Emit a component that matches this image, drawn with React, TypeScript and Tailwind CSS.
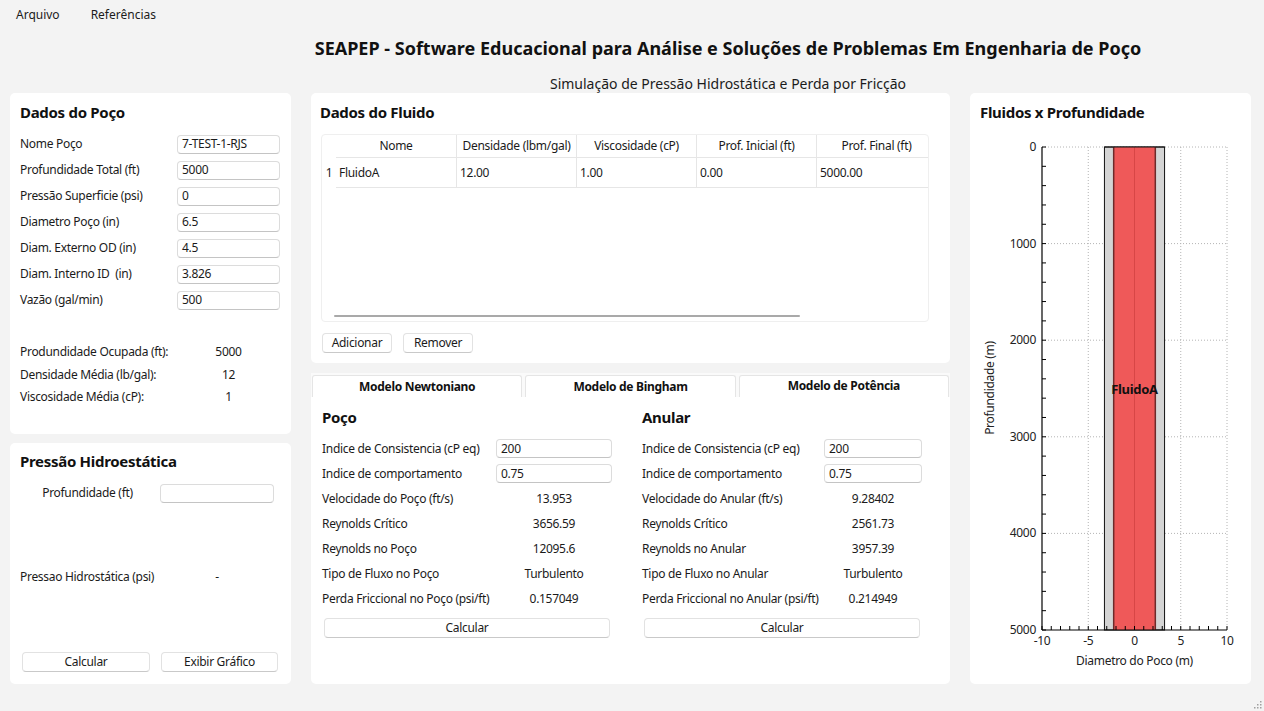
import React from 'react';

const font = { fontFamily: '"Noto Sans", "Open Sans", sans-serif' };

const Input: React.FC<{ value?: string; className?: string }> = ({ value = '', className = '' }) => (
  <div
    className={`h-[19px] bg-white border border-[#dcdcdc] border-b-[#c4c4c4] rounded-[4px] pl-[4px] flex items-center text-[12px] text-[#1b1b1b] ${className}`}
  >
    {value}
  </div>
);

const Button: React.FC<{ label: string; className?: string }> = ({ label, className = '' }) => (
  <div
    className={`h-[20px] bg-white border border-[#e2e2e2] border-b-[#c9c9c9] rounded-[4px] flex items-center justify-center text-[12px] text-[#1b1b1b] ${className}`}
  >
    {label}
  </div>
);

const wellRows: [string, string][] = [
  ['Nome Poço', '7-TEST-1-RJS'],
  ['Profundidade Total (ft)', '5000'],
  ['Pressão Superficie (psi)', '0'],
  ['Diametro Poço (in)', '6.5'],
  ['Diam. Externo OD (in)', '4.5'],
  ['Diam. Interno ID  (in)', '3.826'],
  ['Vazão (gal/min)', '500'],
];

const statRows: [string, string][] = [
  ['Produndidade Ocupada (ft):', '5000'],
  ['Densidade Média (lb/gal):', '12'],
  ['Viscosidade Média (cP):', '1'],
];

const columns = ['Nome', 'Densidade (lbm/gal)', 'Viscosidade (cP)', 'Prof. Inicial (ft)', 'Prof. Final (ft)'];
const fluidRow = ['FluidoA', '12.00', '1.00', '0.00', '5000.00'];

type ModelSide = {
  title: string;
  inputs: [string, string][];
  values: [string, string][];
};

const poco: ModelSide = {
  title: 'Poço',
  inputs: [
    ['Indice de Consistencia (cP eq)', '200'],
    ['Indice de comportamento', '0.75'],
  ],
  values: [
    ['Velocidade do Poço (ft/s)', '13.953'],
    ['Reynolds Crítico', '3656.59'],
    ['Reynolds no Poço', '12095.6'],
    ['Tipo de Fluxo no Poço', 'Turbulento'],
    ['Perda Friccional no Poço (psi/ft)', '0.157049'],
  ],
};

const anular: ModelSide = {
  title: 'Anular',
  inputs: [
    ['Indice de Consistencia (cP eq)', '200'],
    ['Indice de comportamento', '0.75'],
  ],
  values: [
    ['Velocidade do Anular (ft/s)', '9.28402'],
    ['Reynolds Crítico', '2561.73'],
    ['Reynolds no Anular', '3957.39'],
    ['Tipo de Fluxo no Anular', 'Turbulento'],
    ['Perda Friccional no Anular (psi/ft)', '0.214949'],
  ],
};

const ModelColumn: React.FC<{ side: ModelSide; labelW: string; inputW: string; btnW: string; className?: string }> = ({
  side,
  labelW,
  inputW,
  btnW,
  className = '',
}) => (
  <div className={`flex flex-col ${className}`}>
    <div className="h-[20px] leading-[20px] text-[15px] font-bold text-[#111]">{side.title}</div>
    <div className="mt-[9px] flex flex-col">
      {side.inputs.map(([l, v]) => (
        <div key={l} className="h-[25px] flex items-center">
          <div className={`${labelW} shrink-0 text-[12px] whitespace-nowrap`}>{l}</div>
          <Input value={v} className={inputW} />
        </div>
      ))}
      {side.values.map(([l, v]) => (
        <div key={l} className="h-[25px] flex items-center">
          <div className={`${labelW} shrink-0 text-[12px] whitespace-nowrap`}>{l}</div>
          <div className={`${inputW} text-center text-[12px]`}>{v}</div>
        </div>
      ))}
    </div>
    <Button label="Calcular" className={`mt-[7px] ml-[2px] ${btnW}`} />
  </div>
);

const Chart: React.FC = () => {
  const left = 72;
  const right = 257;
  const top = 16;
  const bottom = 499;
  const sx = (v: number) => left + ((v + 10) / 20) * (right - left);
  const sy = (d: number) => top + (d / 5000) * (bottom - top);
  const majorY = [0, 1000, 2000, 3000, 4000, 5000];
  const minorY = Array.from({ length: 26 }, (_, i) => i * 200);
  const majorX = [-10, -5, 0, 5, 10];
  const minorX = Array.from({ length: 21 }, (_, i) => i - 10);

  return (
    <svg width={281} height={553} className="block">
      {/* grid */}
      {majorY.slice(0, 5).map((d) => (
        <line key={`gy${d}`} x1={left} x2={right} y1={sy(d)} y2={sy(d)} stroke="#b4b4b4" strokeDasharray="1 2" />
      ))}
      {majorX.slice(1).map((v) => (
        <line key={`gx${v}`} x1={sx(v)} x2={sx(v)} y1={top} y2={bottom} stroke="#b4b4b4" strokeDasharray="1 2" />
      ))}
      {/* well */}
      <rect x={sx(-3.25)} y={top} width={sx(3.25) - sx(-3.25)} height={bottom - top} fill="#d4d4d4" stroke="#111" strokeWidth={1} />
      <rect x={sx(-2.25)} y={top} width={sx(2.25) - sx(-2.25)} height={bottom - top} fill="#ef5959" />
      <line x1={sx(-2.25)} x2={sx(-2.25)} y1={top} y2={bottom} stroke="#6e2a2a" strokeWidth={1.5} />
      <line x1={sx(2.25)} x2={sx(2.25)} y1={top} y2={bottom} stroke="#6e2a2a" strokeWidth={1.5} />
      <line x1={sx(0)} x2={sx(0)} y1={top} y2={bottom} stroke="#d84646" strokeWidth={1} />
      <line x1={sx(-3.25)} x2={sx(3.25)} y1={top} y2={top} stroke="#111" strokeWidth={1} />
      <text x={sx(0)} y={sy(2500) + 5} textAnchor="middle" fontSize={13} fontWeight={700} fill="#111">
        FluidoA
      </text>
      {/* axes */}
      <line x1={left} x2={left} y1={top} y2={bottom} stroke="#000" strokeWidth={1.2} />
      <line x1={left} x2={right} y1={bottom} y2={bottom} stroke="#000" strokeWidth={1.2} />
      {minorY.map((d) => (
        <line key={`ty${d}`} x1={left} x2={left + 4} y1={sy(d)} y2={sy(d)} stroke="#000" />
      ))}
      {minorX.map((v) => (
        <line key={`tx${v}`} x1={sx(v)} x2={sx(v)} y1={bottom} y2={bottom - 4} stroke="#000" />
      ))}
      {majorY.map((d) => (
        <text key={`ly${d}`} x={left - 6} y={sy(d) + 4} textAnchor="end" fontSize={12} fill="#222">
          {d}
        </text>
      ))}
      {majorX.map((v) => (
        <text key={`lx${v}`} x={sx(v)} y={bottom + 15} textAnchor="middle" fontSize={12} fill="#222">
          {v}
        </text>
      ))}
      <text x={sx(0)} y={bottom + 35} textAnchor="middle" fontSize={12} fill="#222">
        Diametro do Poco (m)
      </text>
      <text
        x={24}
        y={257}
        textAnchor="middle"
        fontSize={12}
        fill="#222"
        transform="rotate(-90 24 257)"
      >
        Profundidade (m)
      </text>
    </svg>
  );
};

const App: React.FC = () => {
  return (
    <div
      className="relative w-[1264px] h-[711px] bg-[#f3f3f3] flex flex-col text-[#1b1b1b] overflow-hidden tracking-[-0.3px]"
      style={font}
    >
      {/* menu */}
      <div className="h-[30px] flex items-center pl-[16px] gap-[31px] text-[12px] tracking-normal">
        <span>Arquivo</span>
        <span>Referências</span>
      </div>

      {/* header */}
      <div className="h-[63px] ml-[192px] flex flex-col items-center tracking-normal">
        <div className="mt-[6px] h-[24px] leading-[24px] text-[18px] font-bold text-[#111]">
          SEAPEP - Software Educacional para Análise e Soluções de Problemas Em Engenharia de Poço
        </div>
        <div className="mt-[15px] h-[18px] leading-[18px] text-[14px]">Simulação de Pressão Hidrostática e Perda por Fricção</div>
      </div>

      {/* main */}
      <div className="flex pl-[10px] gap-[20px] h-[591px]">
        {/* left column */}
        <div className="w-[281px] flex flex-col gap-[9px]">
          <div className="h-[341px] bg-white rounded-[5px] pt-[9px] px-[10px] flex flex-col">
            <div className="h-[20px] leading-[20px] text-[15px] font-bold text-[#111]">Dados do Poço</div>
            <div className="mt-[9px] flex flex-col">
              {wellRows.map(([l, v]) => (
                <div key={l} className="h-[26px] flex items-center">
                  <div className="w-[157px] shrink-0 text-[12px] whitespace-pre">{l}</div>
                  <Input value={v} className="w-[103px]" />
                </div>
              ))}
            </div>
            <div className="mt-[28px] flex flex-col">
              {statRows.map(([l, v]) => (
                <div key={l} className="h-[22.5px] flex items-center">
                  <div className="w-[157px] shrink-0 text-[12px]">{l}</div>
                  <div className="w-[103px] text-center text-[12px]">{v}</div>
                </div>
              ))}
            </div>
          </div>

          <div className="h-[241px] bg-white rounded-[5px] pt-[8px] px-[10px] pb-[12px] flex flex-col">
            <div className="h-[20px] leading-[20px] text-[15px] font-bold text-[#111]">Pressão Hidroestática</div>
            <div className="mt-[10px] h-[24px] flex items-center">
              <div className="w-[135px] shrink-0 text-center text-[12px]">Profundidade (ft)</div>
              <Input className="ml-[5px] w-[114px]" />
            </div>
            <div className="mt-[62px] h-[20px] flex items-center">
              <div className="w-[150px] shrink-0 text-[12px]">Pressao Hidrostática (psi)</div>
              <div className="w-[94px] text-center text-[12px]">-</div>
            </div>
            <div className="mt-auto flex gap-[11px] pl-[2px]">
              <Button label="Calcular" className="w-[128px]" />
              <Button label="Exibir Gráfico" className="w-[117px]" />
            </div>
          </div>
        </div>

        {/* middle column */}
        <div className="w-[639px] flex flex-col">
          <div className="h-[270px] bg-white rounded-[5px] pt-[9px] pl-[9px] flex flex-col">
            <div className="h-[20px] leading-[20px] text-[15px] font-bold text-[#111]">Dados do Fluido</div>
            <div className="mt-[12px] ml-[1px] w-[608px] h-[188px] border border-[#efefef] rounded-[4px] overflow-hidden flex flex-col">
              <div className="flex h-[23px] shrink-0">
                <div className="w-[14px] shrink-0" />
                {columns.map((c, i) => (
                  <div
                    key={c}
                    className={`w-[120px] shrink-0 border-b border-[#e6e6e6] flex items-center justify-center text-[12px] whitespace-nowrap ${
                      i > 0 ? 'border-l border-l-[#e6e6e6]' : ''
                    }`}
                  >
                    {c}
                  </div>
                ))}
              </div>
              <div className="flex h-[30px] shrink-0">
                <div className="w-[14px] shrink-0 flex items-center justify-center text-[12px]">1</div>
                {fluidRow.map((c, i) => (
                  <div
                    key={i}
                    className={`w-[120px] shrink-0 border-b border-[#e6e6e6] flex items-center pl-[3px] text-[12px] ${
                      i > 0 ? 'border-l border-l-[#e6e6e6]' : ''
                    }`}
                  >
                    {c}
                  </div>
                ))}
              </div>
              <div className="flex-1 flex items-end pb-[4px] pl-[12px]">
                <div className="w-[466px] h-[2px] rounded-full bg-[#a9a9a9]" />
              </div>
            </div>
            <div className="mt-[11px] ml-[2px] flex gap-[11px]">
              <Button label="Adicionar" className="w-[70px] h-[19px]" />
              <Button label="Remover" className="w-[70px] h-[19px]" />
            </div>
          </div>

          <div className="mt-[10px] h-[24px] bg-[#fafafa] pt-[2px] px-[1px] flex gap-[3px]">
            <div className="flex-1 bg-white border border-[#e5e5e5] border-b-0 rounded-t-[3px] flex items-center justify-center text-[12px] font-bold text-[#111]">
              Modelo Newtoniano
            </div>
            <div className="flex-1 bg-white border border-[#e5e5e5] border-b-0 rounded-t-[3px] flex items-center justify-center text-[12px] font-bold text-[#111]">
              Modelo de Bingham
            </div>
            <div className="flex-1 bg-white border border-[#e5e5e5] border-b-0 rounded-t-[3px] flex items-start pt-[1px] justify-center text-[12px] font-bold text-[#111]">
              Modelo de Potência
            </div>
          </div>
          <div className="flex-1 bg-white rounded-b-[5px] pt-[10px] pl-[11px] flex">
            <ModelColumn side={poco} labelW="w-[174px]" inputW="w-[116px]" btnW="w-[286px]" />
            <ModelColumn side={anular} labelW="w-[182px]" inputW="w-[98px]" btnW="w-[276px]" className="ml-[30px]" />
          </div>
        </div>

        {/* right column */}
        <div className="w-[281px] bg-white rounded-[5px] flex flex-col">
          <div className="h-[38px] pt-[9px] pl-[10px]">
            <div className="h-[20px] leading-[20px] text-[15px] font-bold text-[#111]">Fluidos x Profundidade</div>
          </div>
          <Chart />
        </div>
      </div>

      {/* resize grip */}
      <svg className="absolute right-[2px] bottom-[2px]" width={9} height={9}>
        {[
          [7, 1],
          [4, 4],
          [7, 4],
          [1, 7],
          [4, 7],
          [7, 7],
        ].map(([x, y]) => (
          <rect key={`${x}-${y}`} x={x} y={y} width={1.5} height={1.5} fill="#a0a0a0" />
        ))}
      </svg>
    </div>
  );
};

export default App;
